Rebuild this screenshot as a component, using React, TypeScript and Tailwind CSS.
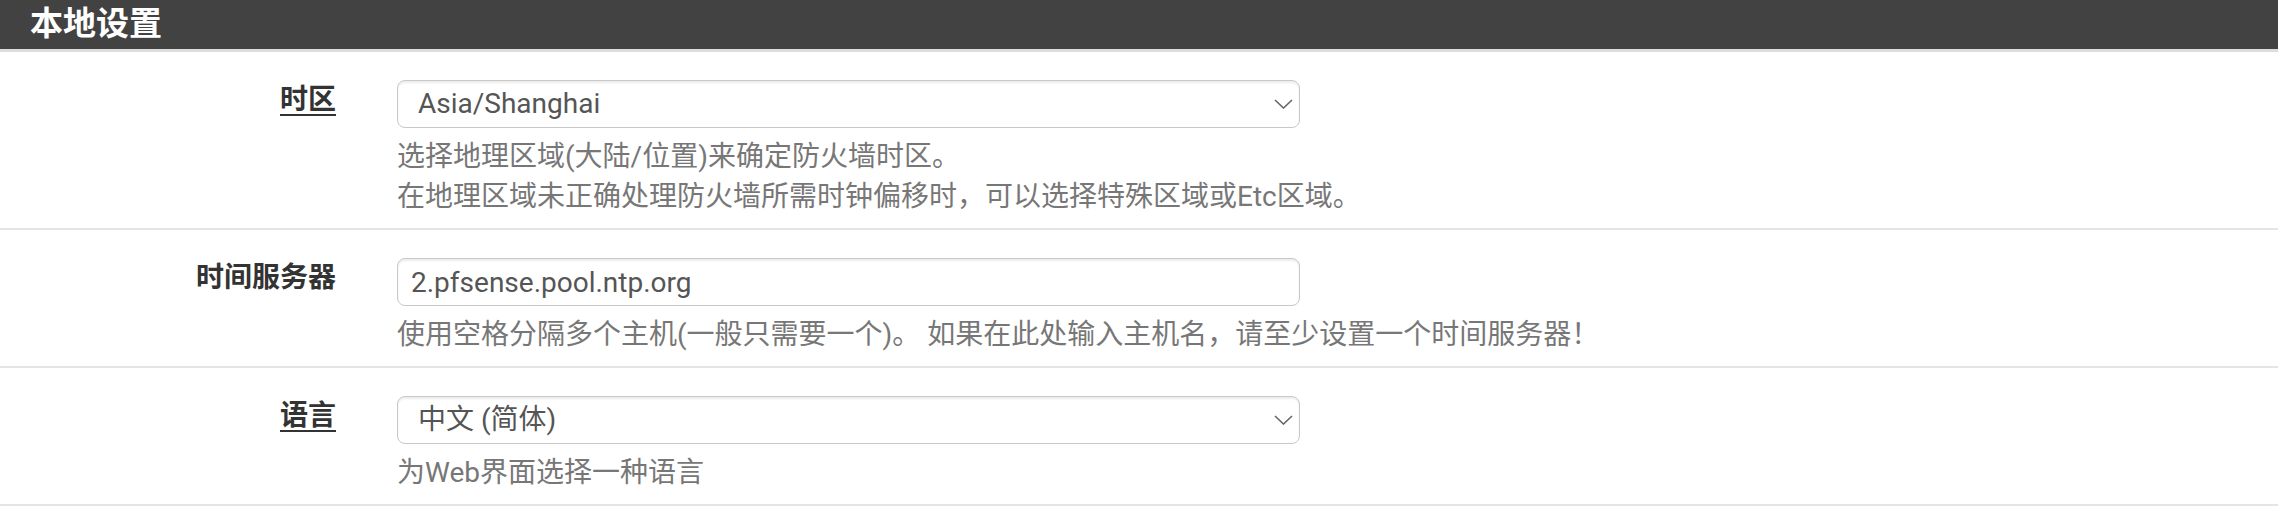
import React from "react";

const font = "font-['Roboto','Noto_Sans_CJK_SC',sans-serif]";

const Chevron = () => (
  <svg
    className="pointer-events-none absolute right-[7px] top-[19px]"
    width="19"
    height="10"
    viewBox="0 0 19 10"
    fill="none"
  >
    <polyline points="1,1 9.5,9 18,1" stroke="#666" strokeWidth="1.6" />
  </svg>
);

const FakeSelect = ({ value }: { value: string }) => (
  <div className="relative h-[48px] w-[903px]">
    <select
      defaultValue={value}
      className={`h-full w-full appearance-none rounded-[8px] border border-[#c8c8c8] bg-white pl-[20px] text-[28px] text-[#555] shadow-[inset_0_2px_2px_rgba(0,0,0,0.075)] outline-none ${font}`}
    >
      <option>{value}</option>
    </select>
    <Chevron />
  </div>
);

const Row = ({
  label,
  underline,
  control,
  help,
}: {
  label: string;
  underline?: boolean;
  control: React.ReactNode;
  help: string[];
}) => (
  <div className="flex border-b-2 border-[#e4e4e4] pb-[11px] pt-[28px]">
    <div className="w-[336px] shrink-0 text-right">
      <span
        className={`text-[28px] font-bold leading-[40px] text-[#333] ${
          underline ? "underline decoration-2 underline-offset-[5px]" : ""
        }`}
      >
        {label}
      </span>
    </div>
    <div className="ml-[61px] flex w-[903px] flex-col">
      {control}
      <div className="mt-[9px] text-[28px] leading-[40px] text-[#777]">
        {help.map((line) => (
          <div key={line} className="whitespace-nowrap">
            {line}
          </div>
        ))}
      </div>
    </div>
  </div>
);

export default function App() {
  return (
    <div className={`w-full bg-white ${font}`}>
      {/* Panel heading */}
      <div className="flex h-[49px] items-center bg-[#424242] pb-[2px] pl-[30px]">
        <h2 className="text-[33px] font-bold leading-none text-white">本地设置</h2>
      </div>
      <div className="h-[3px] bg-[#dddddd]" />

      <Row
        label="时区"
        underline
        control={<FakeSelect value="Asia/Shanghai" />}
        help={[
          "选择地理区域(大陆/位置)来确定防火墙时区。",
          "在地理区域未正确处理防火墙所需时钟偏移时，可以选择特殊区域或Etc区域。",
        ]}
      />

      <Row
        label="时间服务器"
        control={
          <input
            defaultValue="2.pfsense.pool.ntp.org"
            className={`h-[48px] w-[903px] rounded-[8px] border border-[#c8c8c8] bg-white pl-[13px] text-[28px] text-[#555] shadow-[inset_0_2px_2px_rgba(0,0,0,0.075)] outline-none ${font}`}
          />
        }
        help={["使用空格分隔多个主机(一般只需要一个)。 如果在此处输入主机名，请至少设置一个时间服务器！"]}
      />

      <Row
        label="语言"
        underline
        control={<FakeSelect value="中文 (简体)" />}
        help={["为Web界面选择一种语言"]}
      />
    </div>
  );
}
